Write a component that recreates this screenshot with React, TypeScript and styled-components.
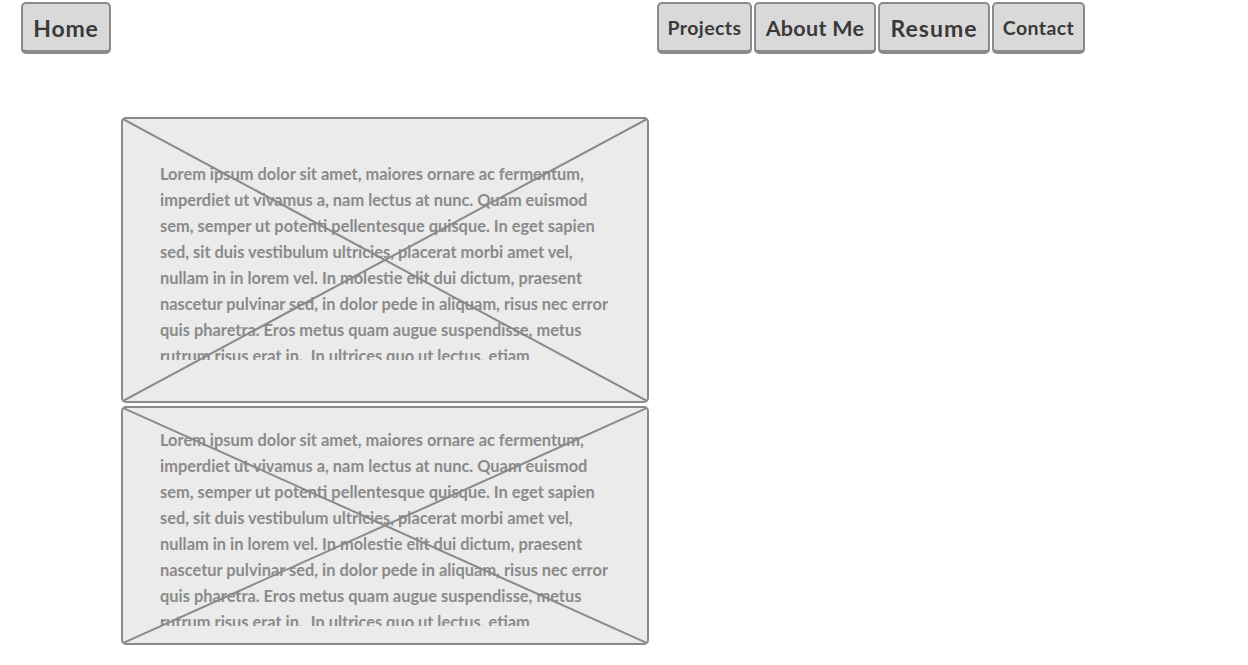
import React from "react";
import styled, { createGlobalStyle } from "styled-components";

const Global = createGlobalStyle`
  html, body { margin: 0; padding: 0; background: #fff; }
  body { font-family: Lato, "Open Sans", sans-serif; }
`;

const Page = styled.div`
  width: 1248px;
  height: 665px;
  overflow: hidden;
  display: flex;
  flex-direction: column;
`;

const Header = styled.header`
  display: flex;
  align-items: flex-start;
  padding: 2px 0 0 21px;
`;

const Nav = styled.nav`
  display: flex;
  gap: 2px;
  margin-left: 546px;
`;

const Button = styled.button<{ $w: number; $fs: number; $ls?: number }>`
  box-sizing: border-box;
  width: ${(p) => p.$w}px;
  height: 52px;
  background: #d9d9d9;
  border: 2px solid #8a8a8a;
  border-bottom-width: 4px;
  border-radius: 5px;
  font-family: Lato, "Open Sans", sans-serif;
  font-weight: 700;
  font-size: ${(p) => p.$fs}px;
  letter-spacing: ${(p) => p.$ls ?? 0}px;
  color: #3a3a3a;
  display: flex;
  align-items: center;
  justify-content: center;
  padding: 1px 0 0 0;
  cursor: pointer;
`;

const Main = styled.main`
  display: flex;
  flex-direction: column;
  gap: 3px;
  padding: 63px 0 0 121px;
`;

const Card = styled.section<{ $h: number; $pt: number }>`
  position: relative;
  box-sizing: border-box;
  width: 528px;
  height: ${(p) => p.$h}px;
  background: #ebebeb;
  border: 2px solid #8a8a8a;
  border-radius: 5px;
  padding: ${(p) => p.$pt}px 0 0 37px;
`;

const TextClip = styled.div`
  height: 199px;
  overflow: hidden;
  font-family: Lato, "Open Sans", sans-serif;
  font-weight: 700;
  font-size: 16.4px;
  line-height: 26px;
  color: #8a8a8a;
`;

const Line = styled.div`
  white-space: pre;
`;

const Cross = styled.svg`
  position: absolute;
  inset: 0;
  width: 100%;
  height: 100%;
  pointer-events: none;
`;

const lines = [
  "Lorem ipsum dolor sit amet, maiores ornare ac fermentum,",
  "imperdiet ut vivamus a, nam lectus at nunc. Quam euismod",
  "sem, semper ut potenti pellentesque quisque. In eget sapien",
  "sed, sit duis vestibulum ultricies, placerat morbi amet vel,",
  "nullam in in lorem vel. In molestie elit dui dictum, praesent",
  "nascetur pulvinar sed, in dolor pede in aliquam, risus nec error",
  "quis pharetra. Eros metus quam augue suspendisse, metus",
  "rutrum risus erat in.  In ultrices quo ut lectus, etiam",
];

function Placeholder({ h, pt }: { h: number; pt: number }) {
  return (
    <Card $h={h} $pt={pt}>
      <TextClip>
        {lines.map((l, i) => (
          <Line key={i}>{l}</Line>
        ))}
      </TextClip>
      <Cross viewBox="0 0 100 100" preserveAspectRatio="none">
        <line x1="0" y1="0" x2="100" y2="100" stroke="#8a8a8a" strokeWidth="2" vectorEffect="non-scaling-stroke" />
        <line x1="100" y1="0" x2="0" y2="100" stroke="#8a8a8a" strokeWidth="2" vectorEffect="non-scaling-stroke" />
      </Cross>
    </Card>
  );
}

export default function App() {
  return (
    <Page>
      <Global />
      <Header>
        <Button $w={90} $fs={23} $ls={0.8}>Home</Button>
        <Nav>
          <Button $w={95} $fs={19.5} $ls={0.4}>Projects</Button>
          <Button $w={122} $fs={21.5} $ls={0.3}>About Me</Button>
          <Button $w={112} $fs={23} $ls={1}>Resume</Button>
          <Button $w={93} $fs={19.5} $ls={0.4}>Contact</Button>
        </Nav>
      </Header>
      <Main>
        <Placeholder h={286} pt={42} />
        <Placeholder h={239} pt={19} />
      </Main>
    </Page>
  );
}
